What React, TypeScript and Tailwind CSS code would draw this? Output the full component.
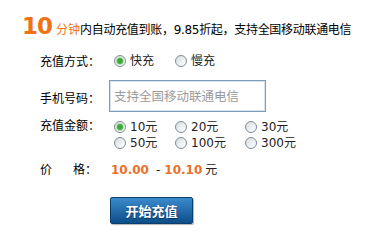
import React from "react";

const CJK = { fontFamily: '"Noto Sans CJK SC", "Noto Sans", sans-serif' };
const MIX = { fontFamily: '"DejaVu Sans", "Noto Sans CJK SC", sans-serif' };

function Radio({ checked }: { checked?: boolean }) {
  return (
    <span className="inline-flex items-center justify-center w-[12px] h-[12px] rounded-full border border-[#7f8c99] bg-gradient-to-br from-[#d9dde1] to-white shrink-0">
      {checked && (
        <span className="w-[6px] h-[6px] rounded-full bg-[#3ea83a] shadow-[0_0_1px_1px_#b9e3b4]" />
      )}
    </span>
  );
}

function Opt({ label, checked }: { label: string; checked?: boolean }) {
  return (
    <span className="inline-flex items-center gap-[4px] h-[16px]">
      <Radio checked={checked} />
      <span className="text-[12px] leading-[16px] text-[#222]" style={MIX}>
        {label}
      </span>
    </span>
  );
}

export default function App() {
  return (
    <div className="w-[368px] h-[229px] bg-white overflow-hidden text-black" style={CJK}>
      <div className="h-[49px] pt-[15px] pl-[22px] flex items-baseline">
        <span className="text-[23px] font-bold leading-[22px] text-[#f07214] tracking-[-1px]" style={{ fontFamily: '"DejaVu Sans", sans-serif' }}>
          10
        </span>
        <span className="ml-[4px] text-[12px] text-[#ee7420]" style={CJK}>
          分钟
        </span>
        <span className="text-[12px] text-black tracking-[-0.3px]" style={MIX}>
          内自动充值到账，9.85折起，支持全国移动联通电信
        </span>
      </div>

      <div className="pl-[40px]">
        <div className="flex items-center h-[24px]">
          <span className="w-[70px] text-[12px]">充值方式：</span>
          <div className="ml-[4px] grid grid-cols-[61px_auto]">
            <Opt label="快充" checked />
            <Opt label="慢充" />
          </div>
        </div>

        <div className="mt-[7px] flex items-center h-[32px]">
          <span className="w-[70px] text-[12px] pt-[3px]">手机号码：</span>
          <div className="ml-[-1px] w-[157px] h-[32px] border border-[#7a9cb8] shadow-[inset_0_0_0_1px_#dbe4ec] flex items-center pl-[4px]">
            <span className="text-[12.5px] text-[#9a9a9a] leading-none">支持全国移动联通电信</span>
          </div>
        </div>

        <div className="mt-[3px] flex items-start h-[36px]">
          <span className="w-[70px] text-[12px] leading-[16px] mt-[2px]">充值金额：</span>
          <div className="ml-[4px] mt-[4px] grid grid-cols-[61px_70px_auto]">
            <Opt label="10元" checked />
            <Opt label="20元" />
            <Opt label="30元" />
            <Opt label="50元" />
            <Opt label="100元" />
            <Opt label="300元" />
          </div>
        </div>

        <div className="mt-[6px] flex items-center h-[24px]">
          <span className="w-[57px] text-[12px] flex justify-between">
            <span>价</span>
            <span>格：</span>
          </span>
          <span className="ml-[14px] flex items-baseline">
            <span className="text-[12px] font-bold text-[#ec6f2a]" style={{ fontFamily: '"DejaVu Sans", sans-serif' }}>
              10.00
            </span>
            <span className="ml-[7px] text-[12px] text-[#222]" style={MIX}>-</span>
            <span className="ml-[4px] text-[12px] font-bold text-[#ec6f2a]" style={{ fontFamily: '"DejaVu Sans", sans-serif' }}>
              10.10
            </span>
            <span className="ml-[3px] text-[12px] text-[#222]">元</span>
          </span>
        </div>

        <div className="mt-[16px] pl-[70px]">
          <button className="w-[83px] h-[27px] border border-[#0b3e6c] rounded-[2px] bg-gradient-to-b from-[#3b8bcc] to-[#0b4e89] shadow-[1px_1px_1px_#b5b5b5] flex items-center justify-center">
            <span className="text-[13px] font-bold text-white leading-none [text-shadow:0_1px_1px_#06305a]">
              开始充值
            </span>
          </button>
        </div>
      </div>
    </div>
  );
}
